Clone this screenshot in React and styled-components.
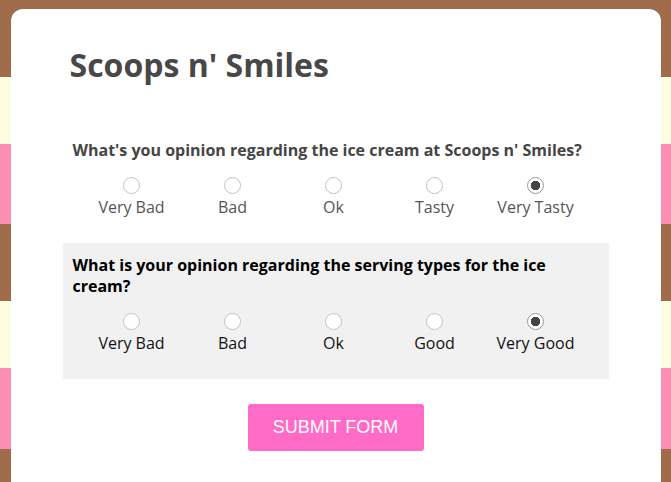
import React from "react";
import styled, { createGlobalStyle } from "styled-components";

const GlobalStyle = createGlobalStyle`
  html, body {
    margin: 0;
    padding: 0;
  }

  body {
    min-height: 100vh;
    font-family: "Open Sans", "Liberation Sans", sans-serif;
    background: repeating-linear-gradient(
      180deg,
      #9f6b4b 0px,
      #9f6b4b 77px,
      #fffde0 77px,
      #fffde0 144px,
      #fd8db5 144px,
      #fd8db5 224.5px
    );
  }
`;

const Card = styled.form`
  width: 650px;
  min-height: calc(100vh - 9px);
  box-sizing: border-box;
  margin: 9px auto 0;
  padding: 34px 52px 0;
  background: #fff;
  border-radius: 12px 12px 0 0;
`;

const Title = styled.h1`
  margin: 0 0 42px;
  padding-left: 7px;
  font-size: 32px;
  font-weight: 700;
  color: #484848;
`;

const QuestionBlock = styled.fieldset`
  margin: 0;
  border: none;
  padding: 12px 10px 25px;
  background: ${props => (props.highlight ? "#f1f1f1" : "transparent")};
  color: ${props => (props.highlight ? "#000" : "#454545")};
`;

const Question = styled.p`
  margin: 0 0 16px;
  font-size: 16px;
  font-weight: 700;
  line-height: 21px;
`;

const Options = styled.div`
  display: grid;
  grid-template-columns: repeat(5, 101px);
  margin-left: 8.5px;
`;

const Option = styled.label`
  display: flex;
  flex-direction: column;
  align-items: center;
  gap: 3px;
`;

const Radio = styled.input`
  appearance: none;
  box-sizing: border-box;
  margin: 0;
  width: 17px;
  height: 17px;
  border: 1px solid #c2c2c2;
  border-radius: 50%;
  background: #fff;

  &:checked {
    border-color: #9a9a9a;
    background: radial-gradient(circle, #444 0 4.5px, #fff 5px);
  }
`;

const OptionText = styled.span`
  font-size: 16px;
  line-height: 21px;
  color: ${props => (props.highlight ? "#111" : "#555")};
`;

const SubmitRow = styled.div`
  display: flex;
  justify-content: center;
  margin-top: 25px;
`;

const SubmitButton = styled.button`
  width: 176px;
  height: 47px;
  border: none;
  border-radius: 3px;
  background: #ff6bc6;
  color: #fff;
  font-family: "Liberation Sans", Arial, sans-serif;
  font-size: 18px;
  text-transform: uppercase;
`;

const questions = [
  {
    name: "icecream",
    text: "What's you opinion regarding the ice cream at Scoops n' Smiles?",
    options: ["Very Bad", "Bad", "Ok", "Tasty", "Very Tasty"],
    highlight: false
  },
  {
    name: "serving",
    text: "What is your opinion regarding the serving types for the ice cream?",
    options: ["Very Bad", "Bad", "Ok", "Good", "Very Good"],
    highlight: true
  }
];

function App() {
  return (
    <>
      <GlobalStyle />
      <Card onSubmit={e => e.preventDefault()}>
        <Title>Scoops n' Smiles</Title>
        {questions.map(q => (
          <QuestionBlock key={q.name} highlight={q.highlight}>
            <Question>{q.text}</Question>
            <Options>
              {q.options.map((opt, i) => (
                <Option key={opt}>
                  <Radio
                    type="radio"
                    name={q.name}
                    defaultChecked={i === q.options.length - 1}
                  />
                  <OptionText highlight={q.highlight}>{opt}</OptionText>
                </Option>
              ))}
            </Options>
          </QuestionBlock>
        ))}
        <SubmitRow>
          <SubmitButton type="submit">Submit Form</SubmitButton>
        </SubmitRow>
      </Card>
    </>
  );
}

export default App;
